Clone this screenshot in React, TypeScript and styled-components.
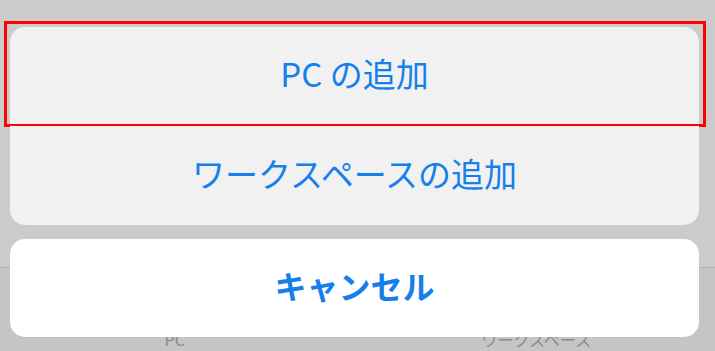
import React from 'react';
import styled, { createGlobalStyle } from 'styled-components';

const GlobalStyle = createGlobalStyle`
    html, body {
        margin: 0;
        padding: 0;
        background: #cbcbcb;
    }
    body {
        font-family: "Noto Sans CJK JP", "Noto Sans", sans-serif;
    }
`;

const tabs = ['PC', 'ワークスペース'];

const actions = [
    { label: 'PC の追加', highlighted: true },
    { label: 'ワークスペースの追加', highlighted: false },
];

export default function App() {
    return (
        <Page>
            <GlobalStyle />
            <Content />
            <TabBar>
                {tabs.map((t) => (
                    <Tab key={t}>{t}</Tab>
                ))}
            </TabBar>

            <Sheet>
                <Group>
                    {actions.map((a, i) => (
                        <ActionRow key={a.label} first={i === 0} last={i === actions.length - 1}>
                            {a.label}
                            {a.highlighted && <Highlight />}
                        </ActionRow>
                    ))}
                </Group>
                <CancelButton>キャンセル</CancelButton>
            </Sheet>
        </Page>
    );
}

const Page = styled.div`
    position: relative;
    width: 715px;
    height: 351px;
    overflow: hidden;
    display: flex;
    flex-direction: column;
    background: #cbcbcb;
`;

const Content = styled.div`
    flex: 1;
`;

const TabBar = styled.div`
    height: 84px;
    border-top: 1px solid #b3b3b3;
    background: #c5c5c5;
    display: grid;
    grid-template-columns: 1fr 1fr;
    padding-top: 61px;
    box-sizing: border-box;
    flex-shrink: 0;
`;

const Tab = styled.div`
    text-align: center;
    font-size: 16px;
    line-height: 20px;
    color: #8a8a8a;
    &:first-child {
        padding-right: 8px;
    }
`;

const Sheet = styled.div`
    position: absolute;
    inset: 0;
    padding: 27px 16px 14px 10px;
    display: flex;
    flex-direction: column;
    gap: 14px;
`;

const Group = styled.div`
    display: flex;
    flex-direction: column;
`;

const ActionRow = styled.div<{ first: boolean; last: boolean }>`
    position: relative;
    height: 99px;
    box-sizing: border-box;
    padding-bottom: 6px;
    display: flex;
    align-items: center;
    justify-content: center;
    background: #f1f1f1;
    color: #1580ec;
    font-size: 33px;
    border-radius: ${(p) => (p.first ? '15px 15px 0 0' : p.last ? '0 0 15px 15px' : '0')};
    border-bottom: ${(p) => (p.last ? 'none' : '1px solid #d8d8d8')};
`;

const Highlight = styled.div`
    position: absolute;
    inset: -6px -7px -2px -6px;
    border: 3px solid #ff0000;
    pointer-events: none;
`;

const CancelButton = styled.div`
    height: 98px;
    box-sizing: border-box;
    padding-bottom: 6px;
    display: flex;
    align-items: center;
    justify-content: center;
    background: #ffffff;
    border-radius: 15px;
    color: #1580ec;
    font-size: 32px;
    font-weight: 700;
`;
